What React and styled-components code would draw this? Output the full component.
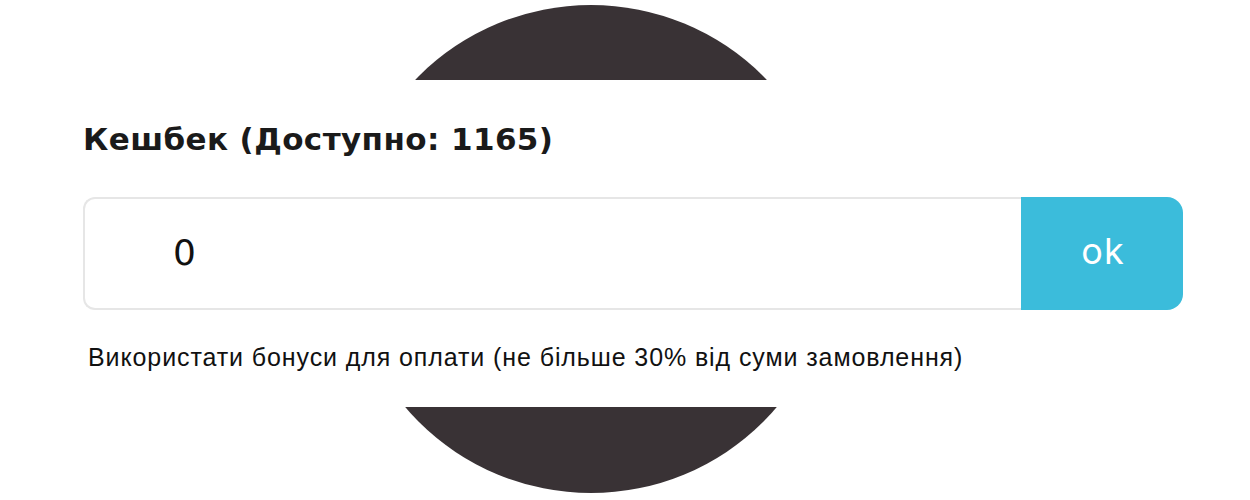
import styled, { createGlobalStyle } from "styled-components";

const Global = createGlobalStyle`
    html, body {
        margin: 0;
        padding: 0;
        background: #ffffff;
    }
`

const App = () => {
    return (
        <Page>
            <Global/>
            <Circle/>
            <Panel>
                <Title>Кешбек (Доступно: 1165)</Title>
                <Row>
                    <Field defaultValue="0"/>
                    <OkButton type="button">ok</OkButton>
                </Row>
                <Hint>Використати бонуси для оплати (не більше 30% від суми замовлення)</Hint>
            </Panel>
        </Page>
    );
};

export default App;

const Page = styled.div`
    position: relative;
    width: 1250px;
    height: 500px;
    overflow: hidden;
    padding-top: 80px;
    box-sizing: border-box;
`
const Circle = styled.div`
    position: absolute;
    left: 347px;
    top: 5px;
    width: 488px;
    height: 488px;
    border-radius: 50%;
    background: #393235;
`
const Panel = styled.div`
    position: relative;
    height: 327px;
    background: #ffffff;
    padding: 37px 67px 0 83px;
    box-sizing: border-box;
    display: flex;
    flex-direction: column;
`
const Title = styled.h2`
    margin: 0;
    font-family: "DejaVu Sans", sans-serif;
    font-weight: 700;
    font-size: 31px;
    line-height: 44px;
    letter-spacing: 0.4px;
    color: #1a1a1a;
`
const Row = styled.div`
    display: flex;
    height: 113px;
    margin-top: 36px;
`
const Field = styled.input`
    flex: 1;
    min-width: 0;
    border: 2px solid #e6e6e6;
    border-right: none;
    border-radius: 12px 0 0 12px;
    padding: 0 0 2px 88px;
    font-family: "DejaVu Sans", sans-serif;
    font-size: 36px;
    color: #111;
    outline: none;
`
const OkButton = styled.button`
    width: 162px;
    border: none;
    border-radius: 0 16px 16px 0;
    background: #3bbcdb;
    color: #ffffff;
    font-family: Inter, sans-serif;
    font-weight: 400;
    font-size: 36px;
    letter-spacing: 1px;
    padding: 0 0 6px 2px;
`
const Hint = styled.p`
    margin: 32px 0 0 5px;
    font-family: "Liberation Sans", Arial, sans-serif;
    font-size: 25px;
    line-height: 30px;
    letter-spacing: 0.9px;
    color: #111;
`
